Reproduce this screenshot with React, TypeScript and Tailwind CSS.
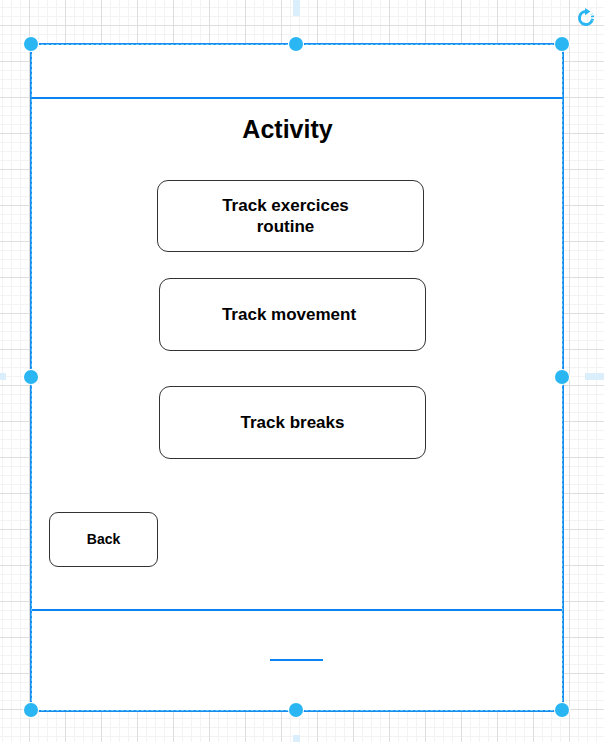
import React from 'react';

const handles = [
    'left-[24px] top-[37px]',
    'left-[289px] top-[37px]',
    'left-[555px] top-[37px]',
    'left-[24px] top-[370px]',
    'left-[555px] top-[370px]',
    'left-[24px] top-[703px]',
    'left-[289px] top-[703px]',
    'left-[555px] top-[703px]',
];

const App: React.FC = () => {
    return (
        <div
            className="relative w-[604px] h-[742px] overflow-hidden bg-white bg-[linear-gradient(to_right,#dedede_1px,transparent_1px),linear-gradient(to_bottom,#dedede_1px,transparent_1px),linear-gradient(to_right,#f3f3f3_1px,transparent_1px),linear-gradient(to_bottom,#f3f3f3_1px,transparent_1px)] bg-[length:36px_36px,36px_36px,9px_9px,9px_9px] bg-[position:29px_25px,29px_25px,29px_25px,29px_25px] pt-[43px] pl-[30px]"
            style={{ fontFamily: '"Liberation Sans", Arial, sans-serif' }}
        >
            {/* guides */}
            <div className="absolute left-[293px] top-0 w-[7px] h-[16px] bg-[#dbeefc]" />
            <div className="absolute left-0 top-[373px] w-[6px] h-[7px] bg-[#dbeefc]" />
            <div className="absolute left-[585px] top-[373px] w-[19px] h-[7px] bg-[#dbeefc]" />
            <div className="absolute left-[293px] top-[735px] w-[7px] h-[7px] bg-[#dbeefc]" />

            {/* shape */}
            <div className="relative w-[534px] h-[669px] bg-white border-2 border-[#1a8cf0] flex flex-col">
                <div className="h-[54px] shrink-0 border-b-2 border-[#0a84f0]" />
                <div className="h-[512px] shrink-0 border-b-2 border-[#0a84f0] flex flex-col items-start">
                    <div className="w-full pr-[19px] pt-[16px] text-center text-[25px] leading-[29px] font-bold text-black">
                        Activity
                    </div>
                    <div className="ml-[125px] mt-[36px] w-[267px] h-[72px] pr-[10px] rounded-[11px] border border-[#333] flex items-center justify-center text-center text-[17px] leading-[21px] font-bold text-black">
                        Track exercices
                        <br />
                        routine
                    </div>
                    <div className="ml-[127px] mt-[26px] w-[267px] h-[73px] pr-[7px] rounded-[11px] border border-[#333] flex items-center justify-center text-[17px] font-bold text-black">
                        Track movement
                    </div>
                    <div className="ml-[127px] mt-[35px] w-[267px] h-[73px] rounded-[11px] border border-[#333] flex items-center justify-center text-[17px] font-bold text-black">
                        Track breaks
                    </div>
                    <div className="ml-[17px] mt-[53px] w-[109px] h-[55px] rounded-[9px] border border-[#333] flex items-center justify-center text-[14px] font-bold text-black">
                        Back
                    </div>
                </div>
                <div className="flex-1">
                    <div className="ml-[238px] mt-[48px] w-[53px] h-[2px] bg-[#0a84f0]" />
                </div>
                <div className="absolute -inset-[1px] border border-dashed border-[#5ec8f8] pointer-events-none" />
            </div>

            {/* selection handles */}
            {handles.map((pos) => (
                <div
                    key={pos}
                    className={`absolute ${pos} w-[14px] h-[14px] rounded-full bg-[#29b6f2] ring-1 ring-white`}
                />
            ))}

            {/* rotate handle */}
            <svg className="absolute left-[576px] top-[8px]" width="20" height="20" viewBox="0 0 20 20">
                <path d="M10 3.5 A6.5 6.5 0 1 0 16.1 12.2" fill="none" stroke="#29b6f2" strokeWidth="3" />
                <path d="M16.1 12.2 A6.5 6.5 0 0 0 15.5 6" fill="none" stroke="#29b6f2" strokeWidth="3" strokeDasharray="1.6 1.4" />
                <path d="M9 0 L14.5 3.5 L9 7.2 Z" fill="#29b6f2" />
            </svg>
        </div>
    );
};

export default App;
